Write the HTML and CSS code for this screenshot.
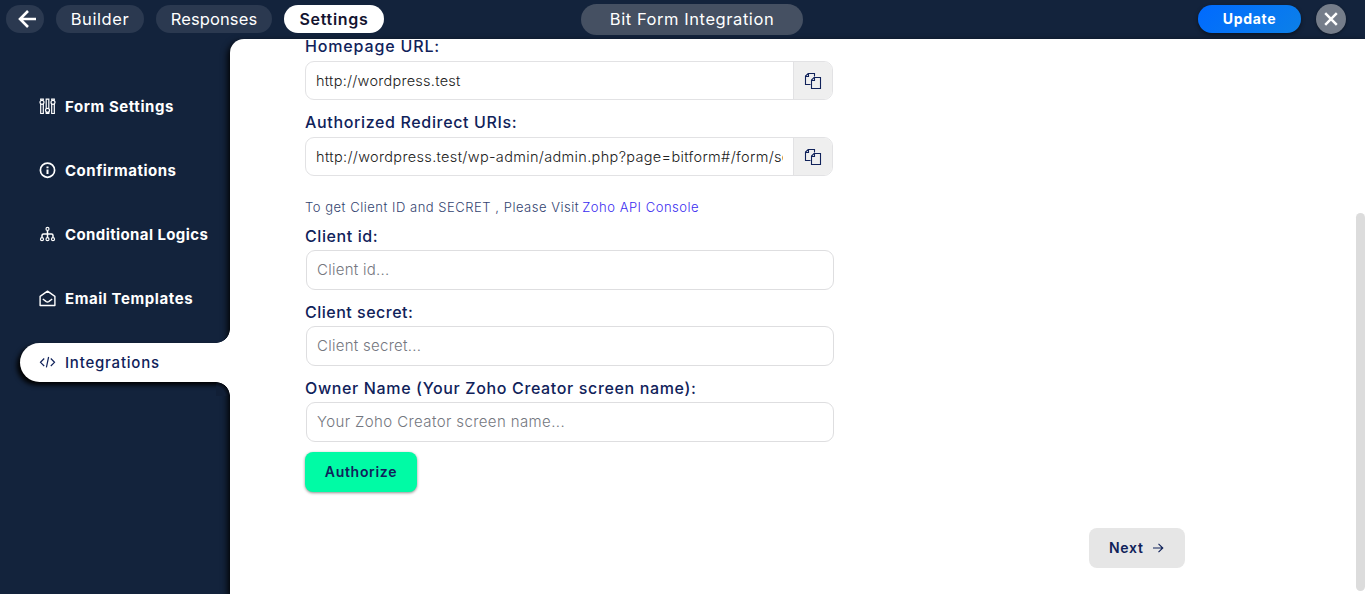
FILE: index.html
```html
<!DOCTYPE html>
<html lang="en">
<head>
<meta charset="utf-8">
<title>Bit Form Integration</title>
<link rel="stylesheet" href="styles.css">
</head>
<body>
<header class="topbar">
  <nav class="tabs">
    <a class="tab back" aria-label="Back"><svg width="20" height="20" viewBox="0 0 20 20" fill="none" stroke="#fff" stroke-width="2.6"><path d="M19 10H3M11 2 3 10l8 8"/></svg></a>
    <a class="tab builder"><span>Builder</span></a>
    <a class="tab responses"><span>Responses</span></a>
    <a class="tab settings"><span>Settings</span></a>
  </nav>
  <div class="form-name"><span>Bit Form Integration</span></div>
  <div class="actions">
    <button class="update"><span>Update</span></button>
    <button class="close" aria-label="Close"><svg width="14" height="14" viewBox="0 0 14 14" stroke="#fff" stroke-width="2.5"><path d="M1.2 1.2l11.600 11.600M12.800 1.200 1.200 12.800"/></svg></button>
  </div>
</header>
<div class="body">
  <aside class="sidebar">
    <a class="item i1"><svg width="17" height="17" viewBox="0 0 17 17" fill="none" stroke="#fff" stroke-width="1.200"><circle cx="3" cy="4.300" r="2"/><circle cx="8.500" cy="12.300" r="2"/><circle cx="14" cy="4.300" r="2"/><path d="M1.700 2.600V1.200h2.600v1.400M1.700 6v9.500h2.600V6M7.200 10.800V1.200h2.600v9.600M7.200 13.800v1.700h2.600v-1.700M12.700 2.600V1.200h2.600v1.400M12.700 6v9.500h2.600V6"/></svg><span>Form Settings</span></a>
    <a class="item i2"><svg width="17" height="17" viewBox="0 0 17 17" fill="none" stroke="#fff" stroke-width="1.700"><circle cx="8.500" cy="8.200" r="7.100"/><path d="M8.500 7.500v4.600M8.500 4.500v1.800" stroke-width="2"/></svg><span>Confirmations</span></a>
    <a class="item i3"><svg width="17" height="17" viewBox="0 0 17 17" fill="none" stroke="#fff" stroke-width="1.200"><circle cx="8.500" cy="2.900" r="1.500"/><circle cx="3" cy="13.200" r="1.500"/><circle cx="8.500" cy="13.200" r="1.500"/><circle cx="14" cy="13.200" r="1.500"/><path d="M8.500 4.500v7.100M3 11.600V9.500q0-1.500 1.500-1.500h8q1.500 0 1.500 1.500v2.100" stroke-width="1.500"/></svg><span>Conditional Logics</span></a>
    <a class="item i4"><svg width="17" height="17" viewBox="0 0 17 17" fill="none" stroke="#fff" stroke-width="1.400" stroke-linejoin="round"><path d="M1.100 6.300 8.500 1.200l7.400 5.100v9.200H1.100zM3.800 9l3.500 2.600q1.200.7 2.400 0L13.200 9"/></svg><span>Email Templates</span></a>
    <a class="item i5 active"><svg width="17" height="17" viewBox="0 0 17 17" fill="none" stroke="#10225a" stroke-width="1.200"><path d="M5.200 4.500 1.500 8.300 5.200 12M11.800 4.500l3.700 3.800-3.700 3.700M9.600 3 7.400 13.300"/></svg><span>Integrations</span></a>
  </aside>
  <main class="content">
    <div class="form">
      <label class="label l1"><span>Homepage URL:</span></label>
      <div class="copy-field">
        <div class="value v1"><span>http://wordpress.test</span></div>
        <button class="copy" aria-label="Copy"><svg width="18" height="18" viewBox="0 0 18 18" fill="none" stroke="#10225a" stroke-width="1.100"><path d="M6.500 12.500h-5V4L4.200 1.500h6.300v3M1.500 4.500h3v-3M16.500 5.500v11h-9V8L10 5.500zM7.500 8.500h3v-3"/></svg></button>
      </div>
      <label class="label l2"><span>Authorized Redirect URIs:</span></label>
      <div class="copy-field">
        <div class="value v2"><span>http://wordpress.test/wp-admin/admin.php?page=bitform#/form/se</span></div>
        <button class="copy" aria-label="Copy"><svg width="18" height="18" viewBox="0 0 18 18" fill="none" stroke="#10225a" stroke-width="1.100"><path d="M6.500 12.500h-5V4L4.200 1.500h6.300v3M1.500 4.500h3v-3M16.500 5.500v11h-9V8L10 5.500zM7.500 8.500h3v-3"/></svg></button>
      </div>
      <p class="note"><span class="hint">To get Client ID and SECRET , Please Visit</span><span class="link">Zoho API Console</span></p>
      <label class="label l3"><span>Client id:</span></label>
      <div class="input p1"><span>Client id...</span></div>
      <label class="label l4"><span>Client secret:</span></label>
      <div class="input p2"><span>Client secret...</span></div>
      <label class="label l5"><span>Owner Name (Your Zoho Creator screen name):</span></label>
      <div class="input p3"><span>Your Zoho Creator screen name...</span></div>
      <button class="authorize"><span>Authorize</span></button>
    </div>
    <button class="next"><span>Next</span><svg width="12" height="12" viewBox="0 0 12 12" fill="none" stroke="#10225a" stroke-width="1.100"><path d="M1 6h9.800M6.500 1.800 10.800 6l-4.300 4.200"/></svg></button>
  </main>
  <div class="scrollbar"></div>
</div>
</body>
</html>
```
FILE: styles.css
```css
* { box-sizing: border-box; }
body { margin: 0; width: 1365px; height: 594px; overflow: hidden; background: #13233c; color: #10225a; font-family: Inter, "Open Sans", sans-serif; }
button { border: 0; padding: 0; font: inherit; color: inherit; }
span { white-space: nowrap; }
svg { display: block; flex: none; }

.topbar { height: 39px; display: grid; grid-template-columns: 581px 222px 1fr; align-items: start; color: #fff; }
.tabs { display: flex; gap: 12px; padding: 5px 0 0 6px; }
.tab { height: 28px; border-radius: 14px; background: #2b3950; display: flex; align-items: center; justify-content: center; font-size: 16.5px; padding-bottom: 1px; }
.back { width: 38px; padding: 0 0 0 4px; }
.builder { width: 88px; letter-spacing: .6px; }
.responses { width: 116px; letter-spacing: .1px; }
.settings { width: 100px; background: #fff; color: #13132f; font-weight: 600; font-size: 16px; letter-spacing: .7px; }
.form-name { margin-top: 4px; height: 31px; border-radius: 16px; background: #455062; display: flex; align-items: center; justify-content: center; font-size: 16.5px; letter-spacing: .57px; padding-bottom: 1px; }
.actions { display: flex; justify-content: flex-end; gap: 15px; padding: 4px 19px 0 0; }
.update { margin-top: 1px; width: 103px; height: 28px; border-radius: 14px; background: linear-gradient(135deg, #006aff, #0c80e8); font-size: 14px; font-weight: 700; letter-spacing: .7px; padding-bottom: 1px; box-shadow: 0 2px 4px rgba(0,0,0,.45); }
.close { width: 30px; height: 30px; border-radius: 50%; background: #757d8a; display: grid; place-items: center; box-shadow: 0 1px 3px rgba(0,0,0,.4); }

.body { height: 555px; display: flex; position: relative; }
.sidebar { width: 230px; padding: 48px 0 0 20px; display: flex; flex-direction: column; gap: 25px; position: relative; z-index: 1; }
.item { height: 39px; padding-left: 19px; display: flex; align-items: center; gap: 9px; font-size: 15px; font-weight: 700; color: #fff; position: relative; }
.i1 { letter-spacing: .57px; }
.i2 { letter-spacing: .5px; }
.i3 { letter-spacing: .4px; }
.i4 { letter-spacing: .57px; }
.i5 { letter-spacing: .78px; }
.active { background: #fff; border-radius: 20px 0 0 20px; color: #10225a; font-weight: 500; box-shadow: -3px 3px 5px #000; clip-path: inset(-14px 0 -14px -14px); }
.active::before, .active::after { content: ""; position: absolute; right: 0; width: 14px; height: 14px; }
.active::before { top: -14px; background: radial-gradient(circle at 0 0, transparent 13.5px, #fff 14.2px); }
.active::after { bottom: -14px; background: radial-gradient(circle at 0 100%, #111f36 9px, #060b14 13.5px, #fff 14.2px); }

.content { flex: 1; background: #fff; border-top-left-radius: 14px; padding: 0 0 0 75px; box-shadow: -2px 3px 7px #000; display: flex; flex-direction: column; }
.form { width: 529px; display: flex; flex-direction: column; margin-top: -4px; }
.label { height: 22px; display: flex; align-items: center; font-size: 16px; font-weight: 500; }
.l1 { letter-spacing: .85px; }
.l2 { letter-spacing: .65px; }
.l3 { letter-spacing: .6px; }
.l4 { letter-spacing: .5px; }
.l5 { letter-spacing: .64px; }
.copy-field { width: 528px; height: 39px; margin: 4px 0 11px; border: 1px solid #e2e2e4; border-radius: 9px; display: flex; overflow: hidden; }
.value { flex: 1; min-width: 0; margin: 0 10px; overflow: hidden; display: flex; align-items: center; font-size: 14.5px; font-weight: 300; color: #222; }
.v1 { letter-spacing: .26px; }
.v2 { letter-spacing: .34px; }
.copy { width: 39px; background: #efefef; border-left: 1px solid #e2e2e4; display: grid; place-items: center; }
.note { height: 20px; margin: 10px 0 8px; display: flex; gap: 3px; align-items: center; font-size: 13px; font-weight: 300; letter-spacing: .52px; color: #33446f; }
.link { color: #3a2cf0; }
.input { margin: 3px 0 11px 1px; height: 40px; border: 1px solid #dedee0; border-radius: 9px; padding: 0 0 1px 10px; display: flex; align-items: center; font-size: 15px; font-weight: 300; color: #747780; }
.p1, .p2 { letter-spacing: .27px; }
.p3 { letter-spacing: .39px; }
.authorize { margin-top: -1px; width: 112px; height: 40px; border-radius: 8px; background: #00fba5; font-size: 14px; font-weight: 600; letter-spacing: .7px; padding-bottom: 1px; box-shadow: 0 1px 3px rgba(0,0,0,.45); }
.next { margin: 36px 0 0 784px; width: 96px; height: 40px; border-radius: 8px; background: #e6e6e6; display: flex; align-items: center; padding: 0 0 1px 20px; gap: 8px; font-size: 14px; font-weight: 600; letter-spacing: .7px; }
.scrollbar { position: absolute; right: 0; top: 174px; width: 9px; height: 378px; border-radius: 5px; background: #dcdcdc; }
```
